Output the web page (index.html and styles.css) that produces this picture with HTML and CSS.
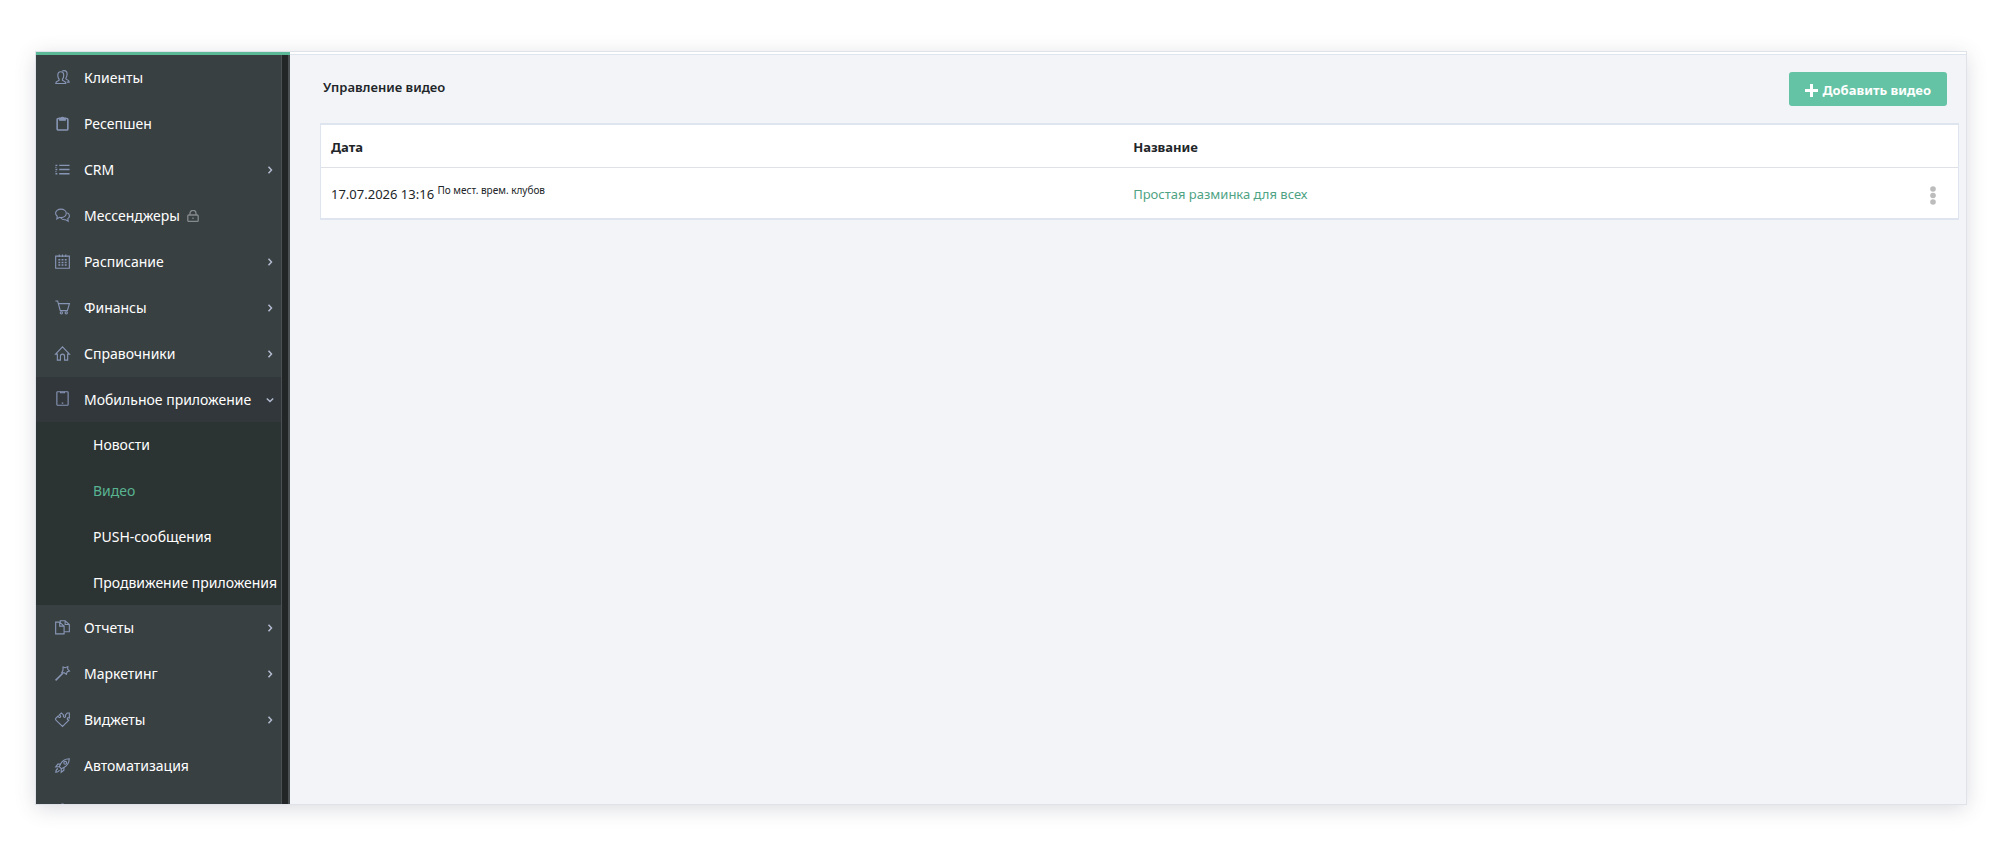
FILE: index.html
```html
<!DOCTYPE html>
<html lang="ru">
<head>
<meta charset="utf-8">
<meta name="viewport" content="width=device-width, initial-scale=1">
<title>Управление видео</title>
<link rel="stylesheet" href="styles.css">
</head>
<body>
<svg class="defs" aria-hidden="true">
  <symbol id="chev-right" viewBox="0 0 8 8"><path d="M2.5 .8 5.5 4 2.5 7.2"/></symbol>
  <symbol id="chev-down" viewBox="0 0 8 8"><path d="M.8 2.5 4 5.5 7.2 2.5"/></symbol>
</svg>
<div class="app">
  <aside class="sidebar">
    <nav class="menu" aria-label="Меню">
      <a class="item" href="#">
        <svg class="icon" viewBox="0 0 16 16"><path d="M.8 14.4c0-2 1-2.5 2.6-3 1-.3 1.300-.8.9-1.600C3.400 8.500 3 7 3 5.500 3 3.200 4.200 1.800 6.100 1.800s3.200 1.400 3.200 3.700c0 1.500-.4 3-1.300 4.300-.4.800-.1 1.300.9 1.600 1.600.5 2.600 1 2.600 3z"/><path d="M7.600 1.200C8.200.7 8.900.6 9.700.6c2 0 3.200 1.400 3.200 3.700 0 1.500-.4 3-1.200 4.200-.4.700-.2 1.200.8 1.600 1.600.5 2.600 1 2.600 2.800h-2.700"/></svg>
        <span>Клиенты</span>
      </a>
      <a class="item" href="#">
        <svg class="icon" viewBox="0 0 16 16"><rect x="2.300" y="2.600" width="11.400" height="12.400" rx="1.200" stroke-width="1.700"/><path d="M5 2.200h1.700a1.400 1.400 0 0 1 2.600 0H11v2.300H5z" fill="currentColor"/></svg>
        <span>Ресепшен</span>
      </a>
      <a class="item" href="#">
        <svg class="icon" viewBox="0 0 16 16"><path d="M4.500 3.500h11M4.500 8h11M4.500 12.500h11M.5 3.500h2M.5 8h2M.5 12.500h2M.5 5.700h1M.5 10.200h1" stroke-width="1.400"/></svg>
        <span>CRM</span>
        <svg class="chevron"><use href="#chev-right"/></svg>
      </a>
      <a class="item" href="#">
        <svg class="icon" viewBox="0 0 16 16"><path d="M6.300 1.200c3.200 0 5.700 1.900 5.700 4.500s-2.500 4.500-5.700 4.500c-.5 0-1-.1-1.500-.2L2 11.700l.4-2.900C1.300 8 .6 6.900.6 5.700c0-2.600 2.500-4.500 5.700-4.500z"/><path d="M13 5.100c1.500.7 2.400 1.900 2.400 3.300 0 1.200-.7 2.200-1.700 2.900l.3 2.700-2.600-1.500c-2 .3-4-.3-5-1.800"/></svg>
        <span>Мессенджеры</span>
        <svg class="lock" viewBox="0 0 12 12"><rect x=".8" y="5" width="10.400" height="6.400" rx="1"/><path d="M3 5V3.300a3 3 0 0 1 6 0V5M6 7.500v1.400"/></svg>
      </a>
      <a class="item" href="#">
        <svg class="icon" viewBox="0 0 16 16"><path d="M.7 2.200h14.600v13H.7zM4.500.4v2.700M8 .4v2.700M11.500.4v2.700"/><path d="M3.600 6.200h2M7 6.200h2M10.400 6.200h2M3.600 9h2M7 9h2M10.400 9h2M3.600 11.800h2M7 11.800h2M10.400 11.800h2" stroke-width="1.500"/></svg>
        <span>Расписание</span>
        <svg class="chevron"><use href="#chev-right"/></svg>
      </a>
      <a class="item" href="#">
        <svg class="icon" viewBox="0 0 16 16"><path d="M.4 1h2.400l2.800 10.300h7.600l2.200-7.500H3.600"/><circle cx="6.800" cy="13.700" r="1.200"/><circle cx="12" cy="13.700" r="1.200"/></svg>
        <span>Финансы</span>
        <svg class="chevron"><use href="#chev-right"/></svg>
      </a>
      <a class="item" href="#">
        <svg class="icon" viewBox="0 0 16 16"><path d="M.6 8.600 8 .9l7.400 7.700h-1.900V15h-3.300v-4.200a2.200 2.200 0 0 0-4.400 0V15H2.500V8.600z"/></svg>
        <span>Справочники</span>
        <svg class="chevron"><use href="#chev-right"/></svg>
      </a>
      <a class="item item-open" href="#">
        <svg class="icon" viewBox="0 0 16 16"><rect x="2" y=".8" width="12" height="14.400" rx=".8"/><path d="M6 .8v1h4v-1M7.200 12.900h1.600"/></svg>
        <span>Мобильное приложение</span>
        <svg class="chevron"><use href="#chev-down"/></svg>
      </a>
      <div class="submenu">
        <a class="subitem" href="#">Новости</a>
        <a class="subitem subitem-active" href="#">Видео</a>
        <a class="subitem" href="#">PUSH-сообщения</a>
        <a class="subitem" href="#">Продвижение приложения</a>
      </div>
      <a class="item" href="#">
        <svg class="icon" viewBox="0 0 16 16"><path d="M5 2.300H.7v12.500h9v-2.300M5 2.300l4.700 4.200M5 2.300v4.200h4.700v6"/><path d="M5.600 2.300V.8h5.200l4.500 4v7.700H9.700M10.800.8v4h4.500"/></svg>
        <span>Отчеты</span>
        <svg class="chevron"><use href="#chev-right"/></svg>
      </a>
      <a class="item" href="#">
        <svg class="icon" viewBox="0 0 16 16"><path d="M.6 15.400 8.300 7.700" stroke-width="1.700"/><path d="m8.600 1 2.500.8L13.700.6l-.2 2.700 2 2-2.500.9-.9 2.600-2.200-1.500-2.700-.2 1.300-2.500z"/></svg>
        <span>Маркетинг</span>
        <svg class="chevron"><use href="#chev-right"/></svg>
      </a>
      <a class="item" href="#">
        <svg class="icon" viewBox="0 0 16 16"><path d="M.7 6.900 3.300 4.300c.5 1.500 1.300 1.900 2.200 1.300s.7-1.700-.8-2.500L6.800 1l2.300 2.300c-.5 1.600.1 2.500 1.200 2.400 1-.1 1.400-1.200.6-2.300L13 1.100h2.300v5.300c-1.200-.5-2.200-.2-2.200.8s.9 1.500 2 1.200L8 15.300.7 8.300z"/></svg>
        <span>Виджеты</span>
        <svg class="chevron"><use href="#chev-right"/></svg>
      </a>
      <a class="item" href="#">
        <svg class="icon" viewBox="0 0 16 16"><path d="M4.600 9.300C6.300 4.300 9.600 1 15.200.8c-.2 5.600-3.500 8.900-8.500 10.600z"/><circle cx="10.900" cy="5.100" r="1.500"/><path d="M5.500 6.500H3L.8 9.400l3.800-.1M9.500 10.500V13l-2.900 2.200.1-3.800M3.200 11.300c-1.700.3-2.200 1.700-2.400 3.900 2.200-.2 3.600-.7 3.900-2.400"/></svg>
        <span>Автоматизация</span>
      </a>
      <a class="item" href="#">
        <svg class="icon" viewBox="0 0 16 16"><path d="M6.800 2.400 7.200.1h1.600l.4 2.300 2 1 1.900-1.200 1.200 1.200-1.200 1.900.8 2 2 .5v1.600l-2 .4-.8 2 1.200 1.900-1.200 1.200-1.900-1.200-2 .8-.4 1.600H7.200l-.4-1.600-2-.8-1.900 1.200-1.200-1.200 1.200-1.900-.8-2-2-.4V7.800l2-.5.8-2-1.200-1.900 1.200-1.200 1.900 1.200z"/></svg>
      </a>
    </nav>
    <div class="rail"></div>
  </aside>
  <main class="content">
    <header class="head">
      <h1 class="title">Управление видео</h1>
      <button class="add" type="button"><svg class="plus" viewBox="0 0 13 13"><path d="M6.500 0v13M0 6.500h13"/></svg>Добавить видео</button>
    </header>
    <table class="table">
      <thead>
        <tr><th class="col-date">Дата</th><th>Название</th><th class="col-menu"></th></tr>
      </thead>
      <tbody>
        <tr>
          <td>17.07.2026 13:16 <span class="zone">По мест. врем. клубов</span></td>
          <td><a class="link" href="#">Простая разминка для всех</a></td>
          <td class="col-menu"><button class="more" type="button" aria-label="Действия"><svg class="dots" viewBox="0 0 6 19"><circle cx="3" cy="3" r="2.800"/><circle cx="3" cy="9.500" r="2.800"/><circle cx="3" cy="16" r="2.800"/></svg></button></td>
        </tr>
      </tbody>
    </table>
  </main>
</div>
</body>
</html>
```
FILE: styles.css
```css
* { box-sizing: border-box; }
body {
  margin: 0;
  height: 100vh;
  padding: 52px 34px 50px 36px;
  background: #fff;
  color: #212529;
  font: 14px/20px "Noto Sans", "Open Sans", sans-serif;
}
a { text-decoration: none; }
.defs { display: none; }
.app {
  display: flex;
  height: 100%;
  background: #f2f4f8;
  box-shadow: 0 0 0 1px #dfe2e8, 0 4px 20px rgba(60, 65, 90, .2);
}
.sidebar {
  display: flex;
  flex: none;
  width: 254px;
  overflow: hidden;
  border-top: 3px solid #5cb997;
  background: #394042;
}
.menu { flex: 1; }
.rail {
  width: 9px;
  border: solid #4b5052;
  border-width: 0 2px 0 1px;
  background: #222626;
}
.item {
  display: flex;
  align-items: center;
  height: 46px;
  padding: 0 7px 0 19px;
  color: #fff;
  white-space: nowrap;
}
.item-open { height: 45px; background: #32373b; }
.icon {
  flex: none;
  width: 15px;
  height: 15px;
  margin: 0 14px 2px 0;
  overflow: visible;
  fill: none;
  stroke: currentColor;
  stroke-width: 1.200;
  color: #8795b5;
}
.chevron {
  width: 8px;
  height: 8px;
  margin-left: auto;
  fill: none;
  stroke: #b3bbd0;
  stroke-width: 1.500;
}
.lock {
  width: 12px;
  height: 12px;
  margin-left: 7px;
  fill: none;
  stroke: #858b8d;
  stroke-width: 1.300;
}
.submenu { background: #2c3333; }
.subitem {
  display: flex;
  align-items: center;
  height: 46px;
  padding-left: 57px;
  color: #fff;
  white-space: nowrap;
}
.subitem:last-child { height: 45px; }
.subitem-active { color: #58b391; }
.content {
  flex: 1;
  min-width: 0;
  padding: 0 7px 0 30px;
  border-top: 2px solid #fff;
}
.head {
  display: flex;
  align-items: flex-start;
  justify-content: space-between;
  margin: 0 -7px 0 -30px;
  padding: 17px 19px 17px 33px;
  border-top: 1px solid #dfe5ec;
}
.title { margin: 5px 0 0; font-size: 13px; line-height: 20px; font-weight: 600; }
.add {
  display: flex;
  align-items: center;
  gap: 4px;
  height: 34px;
  padding: 2px 16px 0;
  border: 0;
  border-radius: 3px;
  background: #64c3a4;
  color: #fff;
  font: inherit;
  font-size: 13px;
  font-weight: 700;
}
.plus { width: 13px; height: 13px; fill: none; stroke: #fff; stroke-width: 3; }
.table {
  width: 100%;
  border: solid #dfe5ee;
  border-width: 2px 1px;
  border-collapse: separate;
  border-spacing: 0;
  background: #fff;
  font-size: 13px;
}
.table th, .table td { padding: 2px 10px 0; text-align: left; }
.table th { height: 43px; border-bottom: 1px solid #dee2e6; font-weight: 700; }
.table td { height: 50px; }
.col-date { width: 49%; }
.table .col-menu { width: 40px; text-align: right; }
.zone { position: relative; top: -5px; font-size: 10px; }
.link { color: #4ea384; }
.more { padding: 0 12px 0 0; border: 0; background: none; vertical-align: middle; }
.dots { display: block; width: 6px; height: 19px; fill: #bcbcbc; }
```
